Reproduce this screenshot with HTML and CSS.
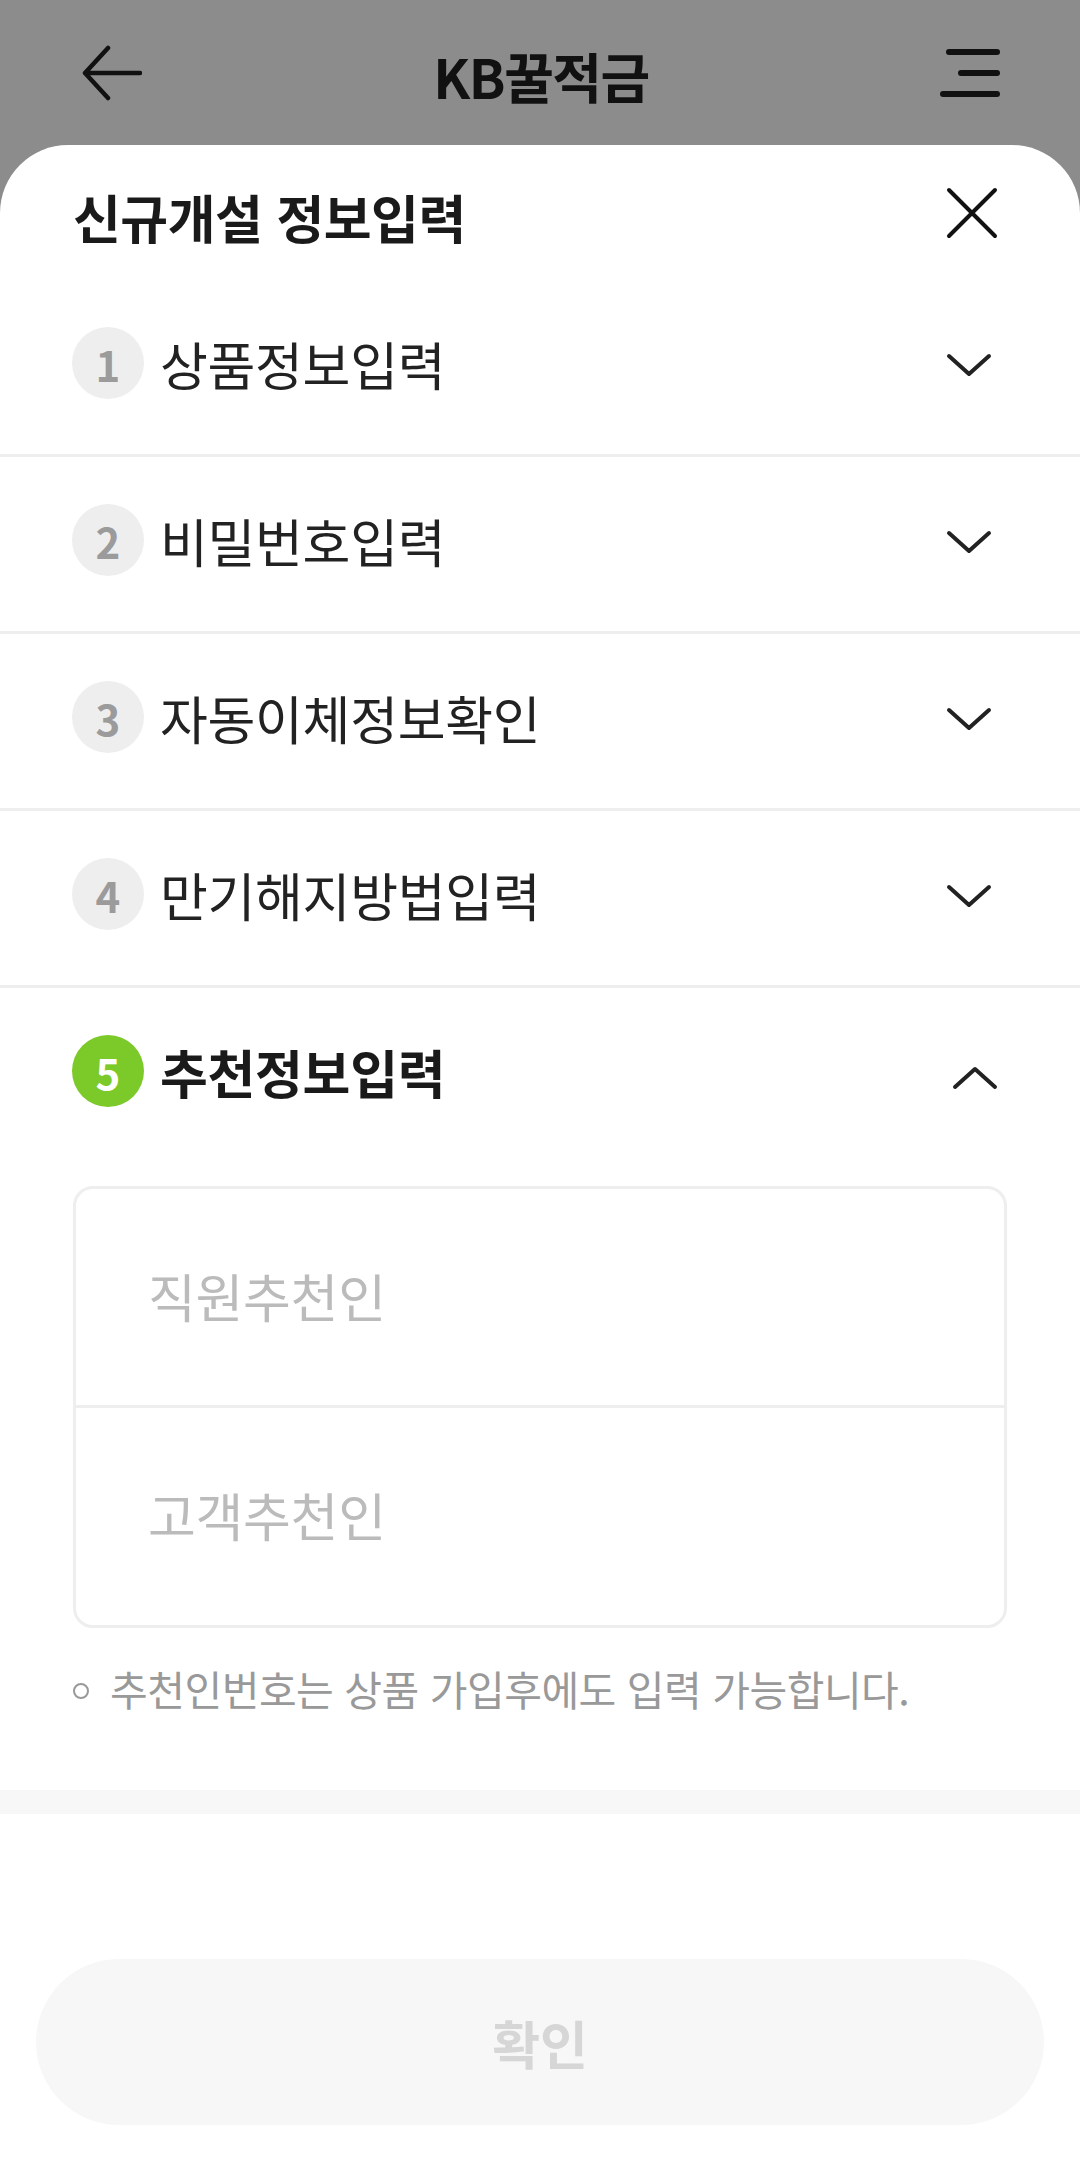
FILE: index.html
```html
<!DOCTYPE html>
<html lang="ko">
<head>
  <meta charset="utf-8">
  <link rel="stylesheet" href="styles.css">
</head>
<body>
  <div class="screen">
    <header class="topbar">
      <svg class="back-icon" width="60" height="56" viewBox="0 0 60 56">
        <path d="M26 3 L3 28 L26 53 M3 28 H58" fill="none" stroke="#111" stroke-width="4.5" stroke-linecap="round" stroke-linejoin="round"/>
      </svg>
      <h1 class="topbar-title">KB꿀적금</h1>
      <svg class="menu-icon" width="60" height="52" viewBox="0 0 60 52">
        <path d="M9 5 H57 M21 26 H57 M3 47 H57" fill="none" stroke="#111" stroke-width="6" stroke-linecap="round"/>
      </svg>
    </header>

    <section class="sheet">
      <div class="sheet-head">
        <h2>신규개설 정보입력</h2>
        <svg width="52" height="52" viewBox="0 0 52 52">
          <path d="M3 3 L49 49 M49 3 L3 49" fill="none" stroke="#111" stroke-width="4" stroke-linecap="round"/>
        </svg>
      </div>

      <div class="step">
        <span class="step-num">1</span>
        <span class="step-title">상품정보입력</span>
        <svg class="chev" width="46" height="24" viewBox="0 0 46 24"><path d="M3 3 L23 21 L43 3" /></svg>
      </div>
      <div class="step">
        <span class="step-num">2</span>
        <span class="step-title">비밀번호입력</span>
        <svg class="chev" width="46" height="24" viewBox="0 0 46 24"><path d="M3 3 L23 21 L43 3" /></svg>
      </div>
      <div class="step">
        <span class="step-num">3</span>
        <span class="step-title">자동이체정보확인</span>
        <svg class="chev" width="46" height="24" viewBox="0 0 46 24"><path d="M3 3 L23 21 L43 3" /></svg>
      </div>
      <div class="step">
        <span class="step-num">4</span>
        <span class="step-title">만기해지방법입력</span>
        <svg class="chev" width="46" height="24" viewBox="0 0 46 24"><path d="M3 3 L23 21 L43 3" /></svg>
      </div>
      <div class="step step-open">
        <span class="step-num">5</span>
        <span class="step-title">추천정보입력</span>
        <svg class="chev chev-up" width="46" height="24" viewBox="0 0 46 24"><path d="M3 21 L23 3 L43 21" /></svg>
      </div>

      <div class="step-body">
        <div class="field-box">
          <div class="field">직원추천인</div>
          <div class="field">고객추천인</div>
        </div>
        <p class="note">추천인번호는 상품 가입후에도 입력 가능합니다.</p>
      </div>
    </section>

    <div class="band"></div>

    <footer class="bottom">
      <button class="confirm" type="button" disabled>확인</button>
    </footer>
  </div>
</body>
</html>
```

FILE: styles.css
```css
* {
  box-sizing: border-box;
}
body {
  margin: 0;
  font-family: "Noto Sans CJK KR", "Noto Sans", sans-serif;
  color: #222;
}
.screen {
  width: 1080px;
  height: 2164px;
  background-color: #8c8c8c;
  overflow: hidden;
}
.topbar {
  height: 145px;
  display: grid;
  grid-template-columns: 1fr auto 1fr;
  align-items: center;
  padding: 0 80px 0 82px;
}
.menu-icon {
  justify-self: end;
}
.topbar-title {
  margin: 0;
  font-size: 54px;
  font-weight: 700;
  letter-spacing: -1.5px;
  color: #111;
  line-height: 1;
  padding-top: 6px;
}
.sheet {
  background: #fff;
  border-radius: 68px 68px 0 0;
  padding-bottom: 73px;
}
.sheet-head {
  height: 135px;
  display: flex;
  align-items: center;
  justify-content: space-between;
  padding: 0 82px 0 73px;
}
.sheet-head h2 {
  margin: 0;
  font-size: 52px;
  font-weight: 700;
  color: #1a1a1a;
  padding-top: 8px;
  letter-spacing: -0.5px;
}
.step {
  display: flex;
  align-items: center;
  height: 177px;
  padding: 0 88px 8px 72px;
  border-bottom: 3px solid #eee;
}
.step-num {
  width: 72px;
  height: 72px;
  border-radius: 50%;
  background: #eee;
  color: #9b9b9b;
  font-size: 42px;
  font-weight: 700;
  display: flex;
  align-items: center;
  justify-content: center;
  flex-shrink: 0;
}
.step-title {
  flex: 1;
  margin-left: 16px;
  font-size: 52px;
  letter-spacing: -0.3px;
  color: #222;
}
.chev {
  margin-top: 4px;
}
.chev path {
  fill: none;
  stroke: #222;
  stroke-width: 4;
  stroke-linecap: round;
  stroke-linejoin: round;
}
.step-open {
  border-bottom: none;
  height: 166px;
  padding-bottom: 0;
}
.step-open .step-num {
  background: #7cc92a;
  color: #fff;
}
.step-open .step-title {
  font-weight: 700;
  color: #1a1a1a;
}
.chev-up {
  margin-right: -6px;
  margin-top: 14px;
}
.step-body {
  padding: 32px 73px 0 73px;
}
.field-box {
  border: 3px solid #eee;
  border-radius: 20px;
}
.field {
  height: 216px;
  display: flex;
  align-items: center;
  padding-left: 72px;
  padding-bottom: 4px;
  font-size: 52px;
  color: #bbb;
  letter-spacing: -0.3px;
}
.field + .field {
  border-top: 3px solid #eee;
  height: 220px;
}
.note {
  position: relative;
  margin: 31px 0 0;
  padding-left: 37px;
  font-size: 41px;
  line-height: 58px;
  color: #999;
  letter-spacing: -0.5px;
}
.note::before {
  content: "";
  position: absolute;
  left: 0;
  top: 24px;
  width: 12px;
  height: 12px;
  border: 2.5px solid #999;
  border-radius: 50%;
}
.band {
  height: 24px;
  background: #f7f7f7;
}
.bottom {
  height: 350px;
  background: #fff;
  padding: 145px 36px 0;
}
.confirm {
  width: 100%;
  height: 166px;
  border: none;
  border-radius: 83px;
  background: #f7f7f7;
  color: #d6d6d6;
  font-family: inherit;
  font-size: 52px;
  font-weight: 700;
}
```
